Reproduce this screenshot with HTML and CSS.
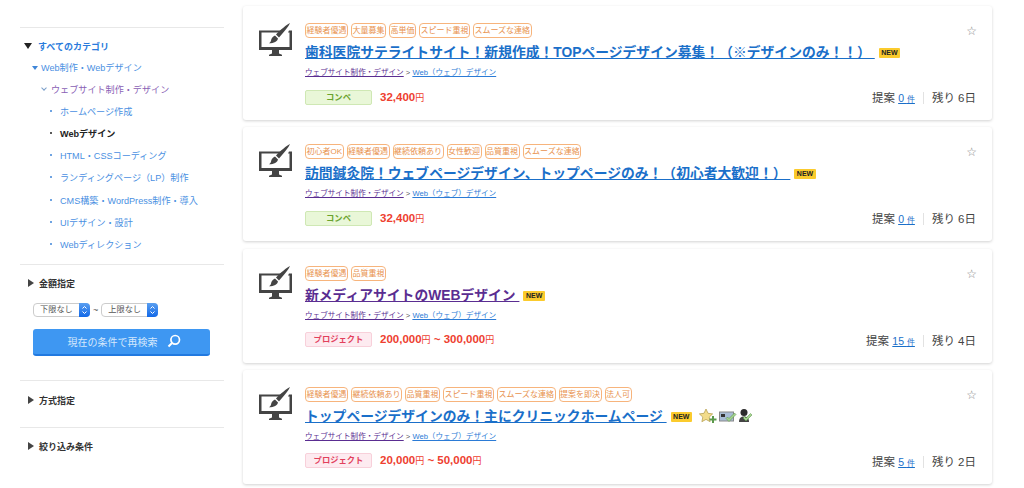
FILE: index.html
```html
<!DOCTYPE html>
<html lang="ja">
  <head>
    <meta charset="UTF-8" />
    <title>Webデザインの仕事一覧</title>
    <link rel="stylesheet" href="styles.css">
  </head>
  <body>
    <svg class="icon-defs" width="0" height="0">
      <symbol id="design-icon" viewBox="0 0 33 33">
        <path fill="#444" fill-rule="evenodd" d="M0 7.500h22l-1.500 2H2.500v14.500h28V9.500H29l1-2h3V27H20v3.500l3 1.200V33H10v-1.300l3-1.200V27H0z" />
        <path fill="#444" d="M31 0c-1 3-7 10-11 14.500l-3-3C21 7 28 1.500 31 0zM16 12.500l3 3c-0.500 3-4 4.800-9 4.800 1.500-1 2-2 2.200-3.500 0.300-2 2-3.500 3.800-4.300z" />
      </symbol>
      <symbol id="select-arrows" viewBox="0 0 11 14">
        <path d="M3.500 5.500L5.500 3.500 7.500 5.500M3.500 8.500L5.500 10.500 7.500 8.500" fill="none" stroke="#fff" stroke-width="1" />
      </symbol>
    </svg>

    <div class="page">
      <aside class="sidebar">
        <section class="side-block categories">
          <h3 class="side-title open"><a href="#">すべてのカテゴリ</a></h3>
          <ul class="cat-list">
            <li class="cat-top"><a href="#">Web制作・Webデザイン</a></li>
            <li class="cat-sub"><a href="#">ウェブサイト制作・デザイン</a></li>
            <li class="cat-leaf"><a href="#">ホームページ作成</a></li>
            <li class="cat-leaf current">Webデザイン</li>
            <li class="cat-leaf"><a href="#">HTML・CSSコーディング</a></li>
            <li class="cat-leaf"><a href="#">ランディングページ（LP）制作</a></li>
            <li class="cat-leaf"><a href="#">CMS構築・WordPress制作・導入</a></li>
            <li class="cat-leaf"><a href="#">UIデザイン・設計</a></li>
            <li class="cat-leaf"><a href="#">Webディレクション</a></li>
          </ul>
        </section>

        <section class="side-block price">
          <h3 class="side-title closed">金額指定</h3>
          <div class="price-range">
            <div class="fake-select"><span>下限なし</span><i><svg width="11" height="14"><use href="#select-arrows" /></svg></i></div>
            <span class="tilde">~</span>
            <div class="fake-select"><span>上限なし</span><i><svg width="11" height="14"><use href="#select-arrows" /></svg></i></div>
          </div>
          <button class="search-btn">
            現在の条件で再検索
            <svg width="14" height="14" viewBox="0 0 14 14"><circle cx="8.200" cy="5.800" r="4.300" fill="none" stroke="#fff" stroke-width="1.700" /><path d="M5 9L1.500 12.500" stroke="#fff" stroke-width="2" /></svg>
          </button>
        </section>

        <section class="side-block method">
          <h3 class="side-title closed">方式指定</h3>
        </section>

        <section class="side-block narrow">
          <h3 class="side-title closed">絞り込み条件</h3>
        </section>
      </aside>

      <main class="job-list">
        <article class="job-card">
          <svg class="job-icon"><use href="#design-icon" /></svg>
          <div class="job-body">
            <div class="tags">
              <span class="tag">経験者優遇</span><span class="tag">大量募集</span><span class="tag">高単価</span><span class="tag">スピード重視</span><span class="tag">スムーズな連絡</span>
            </div>
            <h2 class="job-title"><a href="#">歯科医院サテライトサイト！新規作成！TOPページデザイン募集！（※デザインのみ！！）&nbsp;</a><span class="new">NEW</span></h2>
            <p class="crumbs"><a class="visited" href="#">ウェブサイト制作・デザイン</a> &gt; <a href="#">Web（ウェブ）デザイン</a></p>
            <div class="job-foot">
              <span class="type compe">コンペ</span>
              <span class="money">32,400<small>円</small></span>
              <div class="stats">提案 <a href="#">0 <small>件</small></a><span class="left">残り 6日</span></div>
            </div>
          </div>
          <span class="star">☆</span>
        </article>

        <article class="job-card">
          <svg class="job-icon"><use href="#design-icon" /></svg>
          <div class="job-body">
            <div class="tags">
              <span class="tag">初心者OK</span><span class="tag">経験者優遇</span><span class="tag">継続依頼あり</span><span class="tag">女性歓迎</span><span class="tag">品質重視</span><span class="tag">スムーズな連絡</span>
            </div>
            <h2 class="job-title"><a href="#">訪問鍼灸院！ウェブページデザイン、トップページのみ！（初心者大歓迎！）&nbsp;</a><span class="new">NEW</span></h2>
            <p class="crumbs"><a class="visited" href="#">ウェブサイト制作・デザイン</a> &gt; <a href="#">Web（ウェブ）デザイン</a></p>
            <div class="job-foot">
              <span class="type compe">コンペ</span>
              <span class="money">32,400<small>円</small></span>
              <div class="stats">提案 <a href="#">0 <small>件</small></a><span class="left">残り 6日</span></div>
            </div>
          </div>
          <span class="star">☆</span>
        </article>

        <article class="job-card">
          <svg class="job-icon"><use href="#design-icon" /></svg>
          <div class="job-body">
            <div class="tags">
              <span class="tag">経験者優遇</span><span class="tag">品質重視</span>
            </div>
            <h2 class="job-title"><a class="visited" href="#">新メディアサイトのWEBデザイン&nbsp;</a><span class="new">NEW</span></h2>
            <p class="crumbs"><a class="visited" href="#">ウェブサイト制作・デザイン</a> &gt; <a href="#">Web（ウェブ）デザイン</a></p>
            <div class="job-foot">
              <span class="type project">プロジェクト</span>
              <span class="money">200,000<small>円</small> ~ 300,000<small>円</small></span>
              <div class="stats">提案 <a href="#">15 <small>件</small></a><span class="left">残り 4日</span></div>
            </div>
          </div>
          <span class="star">☆</span>
        </article>

        <article class="job-card">
          <svg class="job-icon"><use href="#design-icon" /></svg>
          <div class="job-body">
            <div class="tags">
              <span class="tag">経験者優遇</span><span class="tag">継続依頼あり</span><span class="tag">品質重視</span><span class="tag">スピード重視</span><span class="tag">スムーズな連絡</span><span class="tag">提案を即決</span><span class="tag">法人可</span>
            </div>
            <h2 class="job-title"><a href="#">トップページデザインのみ！主にクリニックホームページ&nbsp;</a><span class="new">NEW</span>
              <span class="badges">
                <svg width="19" height="16" viewBox="0 0 19 16"><path d="M7 1l2 4.300 4.600 0.600-3.400 3.200 0.900 4.600L7 11.400l-4.100 2.300 0.900-4.600L0.400 5.900 5 5.300z" fill="#f2dc8a" stroke="#b9a255" stroke-width="0.800" /><path d="M13 8h2v2.500h2.500v2H15V15h-2v-2.500h-2.500v-2H13z" fill="#5c9a4c" /></svg>
                <svg width="18" height="16" viewBox="0 0 18 16"><rect x="0.500" y="4" width="14" height="9" fill="#a9bdd6" stroke="#888" /><rect x="2" y="6" width="4" height="3" fill="#333" /><path d="M7 10.500l3 3 7-7-1.500-1.500L10 10.500 8.500 9z" fill="#a5d48f" stroke="#4e8a3e" stroke-width="0.500" /></svg>
                <svg width="15" height="16" viewBox="0 0 15 16"><circle cx="6" cy="4.500" r="3.500" fill="#2b2b2b" /><path d="M1 14c0-4 2-5.500 5-5.500s5 1.500 5 5.500z" fill="#444" /><path d="M5 10l3 3 6-6-1.500-1.500L8 10 6.500 8.500z" fill="#a5d48f" stroke="#4e8a3e" stroke-width="0.500" /></svg>
              </span>
            </h2>
            <p class="crumbs"><a class="visited" href="#">ウェブサイト制作・デザイン</a> &gt; <a href="#">Web（ウェブ）デザイン</a></p>
            <div class="job-foot">
              <span class="type project">プロジェクト</span>
              <span class="money">20,000<small>円</small> ~ 50,000<small>円</small></span>
              <div class="stats">提案 <a href="#">5 <small>件</small></a><span class="left">残り 2日</span></div>
            </div>
          </div>
          <span class="star">☆</span>
        </article>
      </main>
    </div>
  </body>
</html>
```

FILE: styles.css
```css
body {
  margin: 0;
  background: #fff;
  color: #333;
  font-family: "Liberation Sans", "Noto Sans CJK JP", sans-serif;
  font-size: 10px;
  overflow: hidden;
}

a {
  color: #1a6fc9;
}

.icon-defs {
  position: absolute;
}

.page {
  display: flex;
  height: 488px;
  overflow: hidden;
}

/* sidebar */
.sidebar {
  width: 204px;
  margin: 27px 0 0 20px;
  flex-shrink: 0;
}

.side-block {
  border-top: 1px solid #e8e8e8;
}

.side-title {
  position: relative;
  margin: 0;
  font-size: 9px;
  line-height: 14px;
  font-weight: bold;
  color: #333;
}

.side-title a {
  color: #2a7bdc;
  text-decoration: none;
}

.side-title::before {
  content: "";
  position: absolute;
  border-style: solid;
  border-color: transparent;
}

.side-title.open::before {
  left: -14px;
  top: 3px;
  border-width: 6px 4px 0;
  border-top-color: #222;
}

.side-title.closed::before {
  left: -11px;
  top: 2px;
  border-width: 4px 0 4px 6px;
  border-left-color: #444;
}

.categories {
  height: 237px;
  box-sizing: border-box;
  padding: 12px 0 0 18px;
}

.cat-list {
  list-style: none;
  margin: 6px 0 0;
  padding: 0;
}

.cat-list li {
  position: relative;
  height: 22.100px;
  line-height: 16px;
  font-size: 9.100px;
}

.cat-list a {
  color: #4a90e2;
  text-decoration: none;
}

.cat-top {
  margin-left: 3px;
}

.cat-top::before {
  content: "";
  position: absolute;
  left: -9px;
  top: 6px;
  border-style: solid;
  border-color: #3f86d8 transparent transparent;
  border-width: 4px 3px 0;
}

.cat-list .cat-sub {
  margin-left: 13px;
}

.cat-list .cat-sub a {
  color: #8a5fb5;
}

.cat-sub::before {
  content: "";
  position: absolute;
  left: -9px;
  top: 4px;
  width: 3px;
  height: 3px;
  border: solid #7a9fc9;
  border-width: 0 1px 1px 0;
  transform: rotate(45deg);
}

.cat-leaf {
  margin-left: 22px;
}

.cat-leaf::before {
  content: "";
  position: absolute;
  left: -10px;
  top: 6px;
  width: 2px;
  height: 2px;
  border-radius: 50%;
  background: #3f86d8;
}

.cat-leaf.current {
  color: #222;
  font-weight: bold;
}

.cat-leaf.current::before {
  background: #222;
}

.price {
  height: 116px;
  box-sizing: border-box;
  padding: 12px 0 0 19px;
}

.method {
  height: 47px;
  box-sizing: border-box;
  padding: 13px 0 0 19px;
}

.narrow {
  padding: 12px 0 0 19px;
}

.price-range {
  display: flex;
  align-items: center;
  gap: 3px;
  margin: 12px 0 0 -6px;
}

.tilde {
  font-size: 9px;
  color: #555;
}

.fake-select {
  display: flex;
  justify-content: space-between;
  align-items: stretch;
  width: 57px;
  height: 14px;
  box-sizing: border-box;
  border: 1px solid #ccc;
  border-radius: 4px;
  background: #fff;
  font-size: 8.200px;
  line-height: 12px;
  color: #555;
}

.fake-select span {
  padding-left: 6px;
}

.fake-select i {
  width: 11px;
  height: 14px;
  margin: -1px -1px -1px 0;
  border-radius: 0 4px 4px 0;
  background: linear-gradient(#5a9ff0, #1168e8);
}

.search-btn {
  display: flex;
  align-items: center;
  justify-content: center;
  gap: 9px;
  width: 177px;
  height: 27px;
  margin: 12px 0 0 -6px;
  padding: 0 0 1px 5px;
  border: 0;
  border-bottom: 2px solid #2179e0;
  border-radius: 3px;
  background: #3e97f2;
  color: #d5e8fc;
  font-family: inherit;
  font-size: 10px;
}

/* job cards */
.job-list {
  display: flex;
  flex-direction: column;
  gap: 7.300px;
  width: 749px;
  margin: 6px 0 0 19px;
}

.job-card {
  position: relative;
  display: flex;
  flex-shrink: 0;
  height: 114px;
  box-sizing: border-box;
  padding: 17px 16px 0 16px;
  border-radius: 3px;
  background: #fff;
  box-shadow: 0 1px 3px rgba(0, 0, 0, 0.18);
}

.job-icon {
  width: 33px;
  height: 33px;
  flex-shrink: 0;
  margin-right: 13px;
}

.job-body {
  flex: 1;
  min-width: 0;
}

.tags {
  display: flex;
  gap: 3px;
  height: 15px;
}

.tag {
  padding: 0 0.500px;
  border: 1px solid #f7b47c;
  border-radius: 4px;
  font-size: 8px;
  line-height: 13px;
  color: #e8924e;
  white-space: nowrap;
}

.job-title {
  margin: 5px 0 0;
  font-size: 13.800px;
  line-height: 20px;
  white-space: nowrap;
}

.job-title a.visited,
.crumbs a.visited {
  color: #5a2d91;
}

.new {
  display: inline-block;
  margin-left: 4px;
  padding: 0 2.500px;
  height: 10px;
  border-radius: 1px;
  background: #fbcb2d;
  color: #222;
  font-size: 7px;
  line-height: 10px;
  vertical-align: 2px;
}

.badges {
  display: inline-flex;
  gap: 1px;
  margin-left: 3px;
  vertical-align: -3px;
}

.crumbs {
  margin: 4px 0 0;
  font-size: 7.600px;
  line-height: 12px;
  color: #555;
}

.crumbs a {
  color: #2b7bd6;
}

.job-foot {
  display: flex;
  align-items: center;
  margin-top: 10px;
  height: 16px;
}

.type {
  width: 67px;
  height: 15px;
  box-sizing: border-box;
  margin-right: 8px;
  border-radius: 2px;
  font-size: 8.300px;
  line-height: 13px;
  font-weight: bold;
  text-align: center;
}

.compe {
  border: 1px solid #cfe8b4;
  background: #e9f7d8;
  color: #6aa32d;
}

.project {
  border: 1px solid #f8d0da;
  background: #fdebf0;
  color: #e2405c;
}

.money {
  color: #ee4030;
  font-size: 11.500px;
  font-weight: bold;
}

.money small {
  font-size: 9px;
  font-weight: normal;
}

.stats {
  margin-left: auto;
  font-size: 11.500px;
  color: #444;
  white-space: nowrap;
}

.stats a {
  font-size: 10.500px;
}

.stats small {
  font-size: 8px;
}

.left {
  margin-left: 8px;
  padding-left: 8px;
  border-left: 1px solid #e2e2e2;
}

.star {
  position: absolute;
  top: 18px;
  right: 15px;
  font-family: "DejaVu Sans", sans-serif;
  font-size: 12px;
  line-height: 14px;
  color: #888;
}
```
